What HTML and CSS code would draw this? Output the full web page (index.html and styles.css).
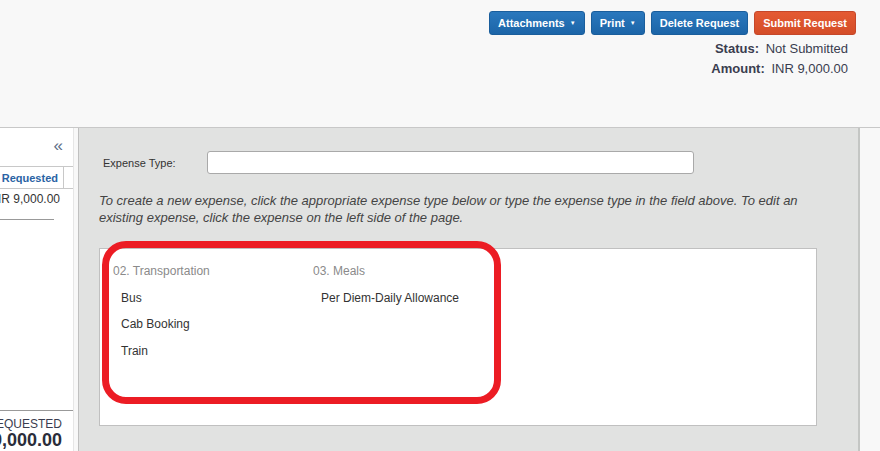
FILE: index.html
```html
<!DOCTYPE html>
<html>
<head>
<meta charset="utf-8">
<link rel="stylesheet" href="styles.css">
</head>
<body>
<div class="page">
  <header class="top">
    <div class="actions">
      <button class="btn btn-blue">Attachments <span class="caret">▼</span></button>
      <button class="btn btn-blue">Print <span class="caret">▼</span></button>
      <button class="btn btn-blue">Delete Request</button>
      <button class="btn btn-orange">Submit Request</button>
    </div>
    <div class="summary">
      <div class="sum-row"><span class="sum-label">Status:</span> <span class="sum-val">Not Submitted</span></div>
      <div class="sum-row"><span class="sum-label">Amount:</span> <span class="sum-val">INR 9,000.00</span></div>
    </div>
  </header>
  <main class="main">
    <aside class="side">
      <div class="side-inner">
        <div class="collapse">«</div>
        <div class="side-head">
          <div class="head-cell">Requested</div>
        </div>
        <div class="side-row">INR 9,000.00</div>
        <div class="side-sep"></div>
        <div class="side-foot">
          <div class="foot-label">TOTAL REQUESTED</div>
          <div class="foot-val">INR 9,000.00</div>
        </div>
      </div>
    </aside>
    <div class="gutter"></div>
    <section class="content">
      <div class="type-row">
        <label class="type-label">Expense Type:</label>
        <input class="type-input" type="text">
      </div>
      <p class="hint">To create a new expense, click the appropriate expense type below or type the expense type in the field above. To edit an existing expense, click the expense on the left side of the page.</p>
      <div class="types">
        <div class="type-col">
          <div class="cat">02. Transportation</div>
          <div class="item">Bus</div>
          <div class="item">Cab Booking</div>
          <div class="item">Train</div>
        </div>
        <div class="type-col">
          <div class="cat">03. Meals</div>
          <div class="item">Per Diem-Daily Allowance</div>
        </div>
      </div>
      <div class="highlight"></div>
    </section>
    <div class="right-space"></div>
  </main>
</div>
</body>
</html>
```
FILE: styles.css
```css
* { box-sizing: border-box; }
html, body { margin: 0; padding: 0; }
body {
  background: #f8f8f8;
  font-family: "Liberation Sans", Arial, sans-serif;
  color: #333;
  width: 880px;
  height: 451px;
  overflow: hidden;
}
.page { display: flex; flex-direction: column; height: 451px; }
.top {
  height: 127px;
  padding: 11px 24px 0 0;
  display: flex;
  flex-direction: column;
  align-items: flex-end;
}
.actions { display: flex; gap: 6px; }
.btn {
  height: 24px;
  border-radius: 3px;
  border: 1px solid #1a5e9c;
  color: #fff;
  font-family: "Liberation Sans", Arial, sans-serif;
  font-weight: bold;
  font-size: 11px;
  padding: 0 8px;
  line-height: 22px;
}
.btn-blue { background: linear-gradient(#2a78bd, #1c65a8); }
.btn-orange { background: linear-gradient(#e45a33, #d44d28); border-color: #c5472a; }
.caret { font-size: 6px; vertical-align: 2px; margin-left: 2px; }
.summary { margin-top: 4px; margin-right: 8px; text-align: right; }
.sum-row { font-size: 13px; line-height: 20px; color: #3a3d4f; }
.sum-label { font-weight: bold; margin-right: 3px; }
.main { flex: 1; display: flex; border-top: 1px solid #c8c8c8; }
.side {
  width: 73px;
  background: #fff;
  overflow: hidden;
  display: flex;
  justify-content: flex-end;
}
.side-inner {
  flex: none;
  width: 200px;
  display: flex;
  flex-direction: column;
  position: relative;
}
.collapse {
  text-align: right;
  padding-right: 10px;
  font-size: 17px;
  line-height: 20px;
  height: 38px;
  padding-top: 8px;
  color: #5c6f88;
}
.side-head {
  border-top: 1px solid #c8c8c8;
  border-bottom: 1px solid #c8c8c8;
  height: 23px;
  display: flex;
  justify-content: flex-end;
}
.head-cell {
  color: #2a63a4;
  font-weight: bold;
  font-size: 11px;
  line-height: 22px;
  padding-right: 5px;
  border-right: 1px solid #c8c8c8;
  margin-right: 9px;
}
.side-row {
  font-size: 12px;
  line-height: 20px;
  text-align: right;
  padding-right: 13px;
  color: #333;
}
.side-sep {
  margin-top: 10px;
  width: 180px;
  margin-left: auto;
  margin-right: 19px;
  border-top: 1px solid #999;
}
.side-foot {
  margin-top: auto;
  border-top: 1px solid #999;
  text-align: right;
  padding: 6px 11px 0 0;
  height: 41px;
}
.foot-label { font-size: 12px; line-height: 14px; color: #3a3d4f; }
.foot-val { font-size: 18px; font-weight: bold; line-height: 19px; color: #2a2d3a; }
.gutter {
  width: 6px;
  background: #f8f8f8;
  border-left: 1px solid #e6e6e6;
  border-right: 1px solid #c0c0c0;
}
.content {
  width: 781px;
  background: #e1e2e1;
  border-right: 2px solid #c4c6c4;
  position: relative;
  padding: 23px 41px 0 20px;
}
.type-row { display: flex; align-items: center; }
.type-label { font-size: 11px; color: #333; width: 108px; padding-left: 4px; }
.type-input {
  width: 487px;
  height: 23px;
  border: 1px solid #a9a9a9;
  border-radius: 3px;
  background: #fff;
}
.hint {
  margin: 18px 0 0 0;
  font-style: italic;
  font-size: 13px;
  line-height: 17px;
  color: #444;
  width: 720px;
}
.types {
  margin-top: 22px;
  height: 178px;
  background: #fff;
  border: 1px solid #c0c0c0;
  display: flex;
  padding: 14px 0 0 13px;
}
.type-col { width: 200px; }
.cat { font-size: 12px; line-height: 16px; color: #8a8a8a; margin-bottom: 11px; }
.item { font-size: 12px; line-height: 16px; color: #333; padding-left: 8px; margin-bottom: 10.3px; }
.highlight {
  position: absolute;
  left: 23px;
  top: 113px;
  width: 399px;
  height: 163px;
  border: 7px solid #ec1c24;
  border-radius: 24px;
}
.right-space { flex: 1; }
```
